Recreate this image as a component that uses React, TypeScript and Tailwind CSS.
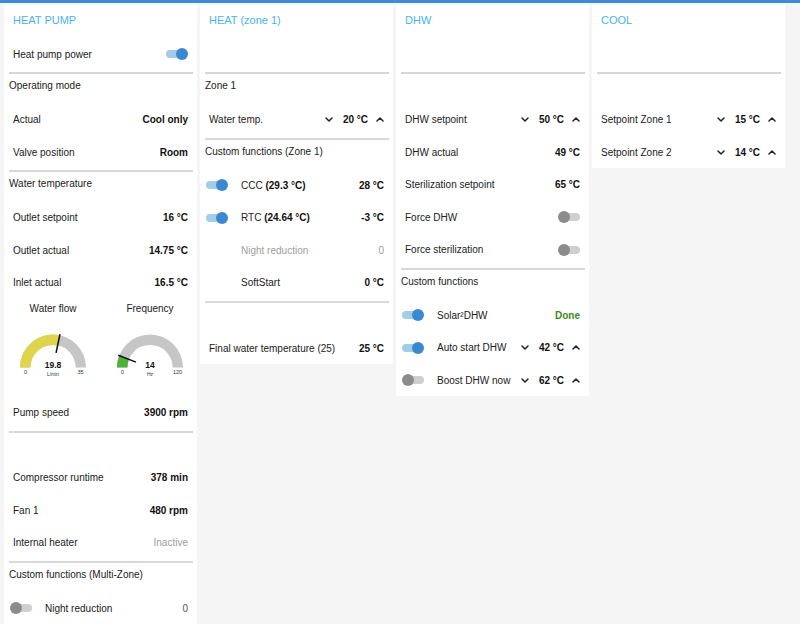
import React from "react";

const FONT = { fontFamily: '"Liberation Sans", Arial, sans-serif' };

function Toggle({ on }: { on: boolean }) {
  return (
    <div className="relative w-[22px] h-[12px] shrink-0">
      <div
        className={
          on
            ? "absolute left-0 right-[1px] top-[2px] h-[8px] rounded-full bg-[#a3cbea]"
            : "absolute left-[1px] right-0 top-[2px] h-[8px] rounded-full bg-[#cfcfcf]"
        }
      />
      <div
        className={
          on
            ? "absolute right-0 top-0 w-[12px] h-[12px] rounded-full bg-[#3a89d0]"
            : "absolute left-0 top-0 w-[12px] h-[12px] rounded-full bg-[#8c8c8c]"
        }
      />
    </div>
  );
}

function ChevDown() {
  return (
    <svg width="8" height="5" viewBox="0 0 8 5" className="shrink-0">
      <polyline points="1,1 4,4 7,1" fill="none" stroke="#222" strokeWidth="1.5" strokeLinecap="round" strokeLinejoin="round" />
    </svg>
  );
}
function ChevUp() {
  return (
    <svg width="8" height="5" viewBox="0 0 8 5" className="shrink-0">
      <polyline points="1,4 4,1 7,4" fill="none" stroke="#222" strokeWidth="1.5" strokeLinecap="round" strokeLinejoin="round" />
    </svg>
  );
}

function Card({ title, children }: { title: string; children?: React.ReactNode }) {
  return (
    <div className="bg-white flex flex-col self-start">
      <div className="h-[32.75px] pl-[9px] pt-[8px] text-[11px] leading-[14px] text-[#4ab2f1]">{title}</div>
      {children}
    </div>
  );
}

function Row({ label, value, valueClass }: { label: string; value?: React.ReactNode; valueClass?: string }) {
  return (
    <div className="h-[32.5px] flex items-center justify-between px-[9px] text-[10px] text-[#212121]">
      <span>{label}</span>
      <span className={valueClass ?? "font-bold text-[#111]"}>{value}</span>
    </div>
  );
}

function BlankRow() {
  return <div className="h-[32.5px]" />;
}

function Divider() {
  return (
    <div className="h-[6px] flex items-center pl-[5px] pr-[4px]">
      <div className="h-[2px] w-full bg-[#d8d8d8]" />
    </div>
  );
}

function Header({ text }: { text?: string }) {
  return <div className="h-[27px] pl-[5px] pt-[1px] text-[10px] leading-[18px] text-[#212121]">{text}</div>;
}

function Stepper({ value }: { value: string }) {
  return (
    <div className="flex items-center">
      <ChevDown />
      <span className="ml-[10px] font-bold text-[#111]">{value}</span>
      <span className="ml-[8px] flex items-center">
        <ChevUp />
      </span>
    </div>
  );
}

function StepRow({ label, value }: { label: string; value: string }) {
  return (
    <div className="h-[32.5px] flex items-center justify-between px-[9px] text-[10px] text-[#212121]">
      <span>{label}</span>
      <Stepper value={value} />
    </div>
  );
}

function ToggleRow({
  on,
  label,
  right,
  muted,
}: {
  on?: boolean;
  label: React.ReactNode;
  right?: React.ReactNode;
  muted?: boolean;
}) {
  return (
    <div className="h-[32.5px] flex items-center pl-[6px] pr-[9px] text-[10px] text-[#212121]">
      <div className="w-[22px] flex items-center shrink-0">{on === undefined ? null : <Toggle on={on} />}</div>
      <span className={muted ? "ml-[13px] text-[#9e9e9e]" : "ml-[13px]"}>{label}</span>
      <div className="ml-auto flex items-center">{right}</div>
    </div>
  );
}

function SwitchRow({ label, on }: { label: string; on: boolean }) {
  return (
    <div className="h-[32.5px] flex items-center justify-between pl-[9px] pr-[9px] text-[10px] text-[#212121]">
      <span>{label}</span>
      <Toggle on={on} />
    </div>
  );
}

function sector(cx: number, cy: number, r0: number, r1: number, a0: number, a1: number) {
  const p = (r: number, a: number) => [cx - r * Math.cos((a * Math.PI) / 180), cy - r * Math.sin((a * Math.PI) / 180)];
  const [x0, y0] = p(r1, a0);
  const [x1, y1] = p(r1, a1);
  const [x2, y2] = p(r0, a1);
  const [x3, y3] = p(r0, a0);
  return `M${x0} ${y0} A${r1} ${r1} 0 0 1 ${x1} ${y1} L${x2} ${y2} A${r0} ${r0} 0 0 0 ${x3} ${y3} Z`;
}

function Gauge({
  label,
  value,
  max,
  unit,
  color,
}: {
  label: string;
  value: number;
  max: number;
  unit: string;
  color: string;
}) {
  const cx = 48;
  const cy = 49.5;
  const r0 = 22.6;
  const r1 = 33;
  const ang = (value / max) * 180;
  const rad = (ang * Math.PI) / 180;
  const nx0 = cx - 15 * Math.cos(rad);
  const ny0 = cy - 15 * Math.sin(rad);
  const nx1 = cx - 34 * Math.cos(rad);
  const ny1 = cy - 34 * Math.sin(rad);
  return (
    <div className="flex flex-col items-center">
      <div className="h-[19px] text-[10px] leading-[19px] text-[#212121]">{label}</div>
      <svg width="96" height="78" viewBox="0 0 96 78">
        <path d={sector(cx, cy, r0, r1, 0, 180)} fill="#c6c6c6" />
        <path d={sector(cx, cy, r0, r1, 0, ang)} fill={color} />
        <line x1={nx0} y1={ny0} x2={nx1} y2={ny1} stroke="#111" strokeWidth="1.5" />
        <text x={cx} y={cy} textAnchor="middle" fontSize="8.5" fontWeight="bold" fill="#111" style={FONT}>
          {value}
        </text>
        <text x={cx} y={cy + 8} textAnchor="middle" fontSize="5" fill="#333" style={FONT}>
          {unit}
        </text>
        <text x={cx - 27.5} y={cy + 6} textAnchor="middle" fontSize="5.5" fill="#333" style={FONT}>
          0
        </text>
        <text x={cx + 27.5} y={cy + 6} textAnchor="middle" fontSize="5.5" fill="#333" style={FONT}>
          {max}
        </text>
      </svg>
    </div>
  );
}

export default function App() {
  return (
    <div className="w-[800px] h-[624px] overflow-hidden bg-[#f5f5f5] flex flex-col" style={FONT}>
      <div className="h-[3px] bg-[#3f8bcf] shrink-0" />
      <div className="pt-[2px] pl-[4px] grid grid-cols-[193px_193px_193px_193px] gap-[3px] items-start">
        {/* HEAT PUMP */}
        <Card title="HEAT PUMP">
          <SwitchRow label="Heat pump power" on={true} />
          <Divider />
          <Header text="Operating mode" />
          <Row label="Actual" value="Cool only" />
          <Row label="Valve position" value="Room" />
          <Divider />
          <Header text="Water temperature" />
          <Row label="Outlet setpoint" value="16 °C" />
          <Row label="Outlet actual" value="14.75 °C" />
          <Row label="Inlet actual" value="16.5 °C" />
          <div className="h-[97.25px] pl-[1px] grid grid-cols-[96px_96px] gap-[1px]">
            <Gauge label="Water flow" value={19.8} max={35} unit="L/min" color="#dfd44c" />
            <Gauge label="Frequency" value={14} max={120} unit="Hz" color="#4fb13a" />
          </div>
          <Row label="Pump speed" value="3900 rpm" />
          <Divider />
          <Header />
          <Row label="Compressor runtime" value="378 min" />
          <Row label="Fan 1" value="480 rpm" />
          <Row label="Internal heater" value="Inactive" valueClass="text-[#9e9e9e]" />
          <Divider />
          <Header text="Custom functions (Multi-Zone)" />
          <ToggleRow on={false} label="Night reduction" right={<span className="text-[#555]">0</span>} />
          <BlankRow />
        </Card>

        {/* HEAT (zone 1) */}
        <Card title="HEAT (zone 1)">
          <BlankRow />
          <Divider />
          <Header text="Zone 1" />
          <StepRow label="Water temp." value="20 °C" />
          <Divider />
          <Header text="Custom functions (Zone 1)" />
          <ToggleRow
            on={true}
            label={
              <>
                CCC <b className="text-[#111]">(29.3 °C)</b>
              </>
            }
            right={<span className="font-bold text-[#111]">28 °C</span>}
          />
          <ToggleRow
            on={true}
            label={
              <>
                RTC <b className="text-[#111]">(24.64 °C)</b>
              </>
            }
            right={<span className="font-bold text-[#111]">-3 °C</span>}
          />
          <ToggleRow muted label="Night reduction" right={<span className="text-[#9e9e9e]">0</span>} />
          <ToggleRow label="SoftStart" right={<span className="font-bold text-[#111]">0 °C</span>} />
          <Divider />
          <Header />
          <Row label="Final water temperature (25)" value="25 °C" />
        </Card>

        {/* DHW */}
        <Card title="DHW">
          <BlankRow />
          <Divider />
          <Header />
          <StepRow label="DHW setpoint" value="50 °C" />
          <Row label="DHW actual" value="49 °C" />
          <Row label="Sterilization setpoint" value="65 °C" />
          <SwitchRow label="Force DHW" on={false} />
          <SwitchRow label="Force sterilization" on={false} />
          <Divider />
          <Header text="Custom functions" />
          <ToggleRow on={true} label="Solar²DHW" right={<span className="font-bold text-[#3b8a1e]">Done</span>} />
          <ToggleRow on={true} label="Auto start DHW" right={<Stepper value="42 °C" />} />
          <ToggleRow on={false} label="Boost DHW now" right={<Stepper value="62 °C" />} />
        </Card>

        {/* COOL */}
        <Card title="COOL">
          <BlankRow />
          <Divider />
          <Header />
          <StepRow label="Setpoint Zone 1" value="15 °C" />
          <StepRow label="Setpoint Zone 2" value="14 °C" />
        </Card>
      </div>
    </div>
  );
}
